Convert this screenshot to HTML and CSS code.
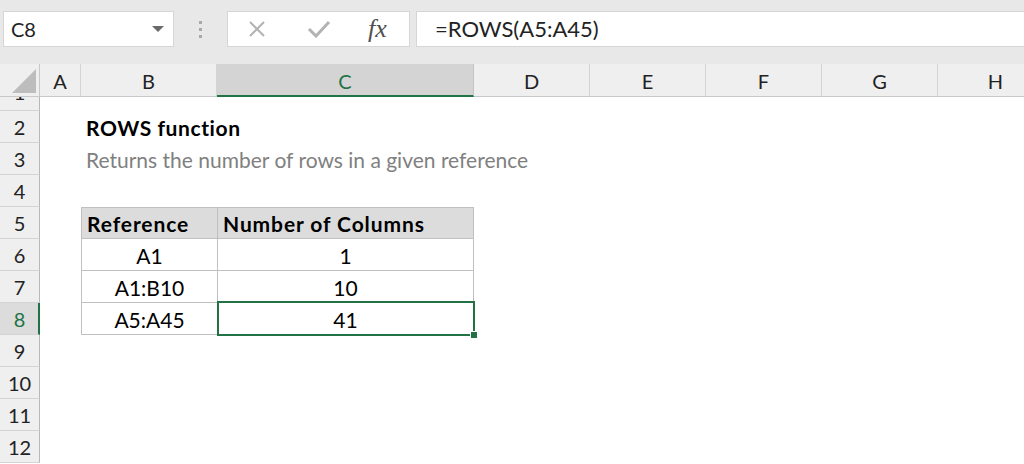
FILE: index.html
```html
<!DOCTYPE html>
<html>
<head>
<meta charset="utf-8">
<link rel="stylesheet" href="styles.css">
</head>
<body>
<div class="toolbar">
  <div class="namebox"><span class="nb-text">C8</span><span class="caret"></span></div>
  <div class="grip"><i></i><i></i><i></i></div>
  <div class="fnbox">
    <svg class="ic-x" width="20" height="16" viewBox="0 0 20 16"><path d="M3 1 L17 15 M17 1 L3 15" stroke="#b3b3b3" stroke-width="2" fill="none"/></svg>
    <svg class="ic-check" width="24" height="18" viewBox="0 0 24 18"><path d="M2 9 L9 16 L22 2" stroke="#b3b3b3" stroke-width="3" fill="none"/></svg>
    <span class="fx">fx</span>
  </div>
  <div class="formula">=ROWS(A5:A45)</div>
</div>
<div class="sheet">
  <div class="corner"><span class="tri"></span></div>
  <div class="ch">A</div>
  <div class="ch">B</div>
  <div class="ch sel">C</div>
  <div class="ch">D</div>
  <div class="ch">E</div>
  <div class="ch">F</div>
  <div class="ch">G</div>
  <div class="ch">H</div>

  <div class="rh r1"><span>1</span></div>
  <div class="rh">2</div>
  <div class="rh">3</div>
  <div class="rh">4</div>
  <div class="rh">5</div>
  <div class="rh">6</div>
  <div class="rh">7</div>
  <div class="rh sel">8</div>
  <div class="rh">9</div>
  <div class="rh">10</div>
  <div class="rh">11</div>
  <div class="rh">12</div>

  <div class="cell title row2">ROWS function</div>
  <div class="cell sub row3">Returns the number of rows in a given reference</div>

  <div class="cell tb colB row5 thead">Reference</div>
  <div class="cell tc colC row5 thead">Number of Columns</div>
  <div class="cell tb colB row6 ctr">A1</div>
  <div class="cell tc colC row6 ctr">1</div>
  <div class="cell tb colB row7 ctr">A1:B10</div>
  <div class="cell tc colC row7 ctr">10</div>
  <div class="cell tb colB row8 ctr">A5:A45</div>
  <div class="cell tc colC row8 ctr active">41</div>
</div>
</body>
</html>
```
FILE: styles.css
```css
html, body {
  margin: 0;
  padding: 0;
  background: #ffffff;
  width: 1024px;
  height: 464px;
  overflow: hidden;
  font-family: "Lato", "Noto Sans", sans-serif;
}

.toolbar {
  height: 64px;
  box-sizing: border-box;
  background: #e8e8e8;
  display: flex;
  align-items: flex-start;
  padding-top: 11px;
}

.namebox {
  margin-left: 3px;
  width: 171px;
  height: 36px;
  box-sizing: border-box;
  background: #fff;
  border: 1px solid #d6d6d6;
  display: flex;
  align-items: center;
  justify-content: space-between;
  padding: 0 9px 0 7px;
  font-size: 20px;
  color: #222;
}

.caret {
  width: 0;
  height: 0;
  border-left: 6px solid transparent;
  border-right: 6px solid transparent;
  border-top: 6px solid #6a6a6a;
}

.grip {
  width: 53px;
  height: 36px;
  display: flex;
  flex-direction: column;
  align-items: center;
  justify-content: center;
  gap: 4px;
}

.grip i {
  display: block;
  width: 3px;
  height: 3px;
  background: #a8a8a8;
}

.fnbox {
  width: 183px;
  height: 36px;
  box-sizing: border-box;
  background: #fff;
  border: 1px solid #d6d6d6;
  display: flex;
  align-items: center;
  padding-left: 19px;
}

.ic-check {
  margin-left: 40px;
}

.fx {
  margin-left: 37px;
  font-family: "Liberation Serif", "DejaVu Serif", serif;
  font-style: italic;
  font-size: 26px;
  color: #505050;
  line-height: 1;
}

.formula {
  margin-left: 6px;
  flex: 1;
  height: 36px;
  box-sizing: border-box;
  background: #fff;
  border: 1px solid #d6d6d6;
  border-right: none;
  padding-left: 18px;
  font-size: 22px;
  line-height: 34px;
  color: #222;
}

.sheet {
  display: grid;
  grid-template-columns: 40px 41px 136px 257px 116px 116px 116px 116px 116px;
  grid-template-rows: 33px 14px repeat(11, 32px);
  font-size: 20px;
  color: #1a1a1a;
}

.corner {
  grid-column: 1;
  grid-row: 1;
  background: #efefef;
  border-right: 1px solid #c8c8c8;
  border-bottom: 1px solid #c8c8c8;
  box-sizing: border-box;
  display: flex;
  align-items: flex-end;
  justify-content: flex-end;
  padding: 0 3px 3px 0;
}

.tri {
  width: 0;
  height: 0;
  border-left: 24px solid transparent;
  border-bottom: 24px solid #bdbdbd;
}

.ch {
  grid-row: 1;
  background: #efefef;
  border-right: 1px solid #d4d4d4;
  border-bottom: 1px solid #c8c8c8;
  box-sizing: border-box;
  text-align: center;
  line-height: 32px;
  padding-top: 1px;
  color: #222;
}

.ch.sel {
  background: #d4d4d4;
  border-bottom: 2px solid #217346;
  color: #217346;
  border-right: 1px solid #c4c4c4;
}

.rh {
  grid-column: 1;
  background: #efefef;
  border-bottom: 1px solid #d4d4d4;
  border-right: 1px solid #b8b8b8;
  box-sizing: border-box;
  text-align: center;
  line-height: 32px;
  color: #222;
  overflow: hidden;
}

.rh.r1 span {
  display: block;
  margin-top: -21px;
}

.rh.sel {
  background: #dcdcdc;
  border-right: 2px solid #217346;
  color: #217346;
  padding-left: 1px;
}

.cell {
  box-sizing: border-box;
  line-height: 31px;
  padding: 1px 5px 0 5px;
  white-space: nowrap;
  font-size: 21px;
}

.title {
  grid-column: 3 / span 3;
  grid-row: 3;
  font-weight: 700;
  letter-spacing: 0.6px;
  color: #000;
}

.sub {
  grid-column: 3 / span 5;
  grid-row: 4;
  color: #808080;
}

.row2 { grid-row: 3; }
.row3 { grid-row: 4; }
.row5 { grid-row: 6; }
.row6 { grid-row: 7; }
.row7 { grid-row: 8; }
.row8 { grid-row: 9; }
.colB { grid-column: 3; }
.colC { grid-column: 4; }

.tb {
  border-left: 1px solid #c0c0c0;
  border-bottom: 1px solid #c0c0c0;
}

.tc {
  border-left: 1px solid #c0c0c0;
  border-right: 1px solid #c0c0c0;
  border-bottom: 1px solid #c0c0c0;
}

.row5.tb, .row5.tc {
  border-top: 1px solid #c0c0c0;
  line-height: 30px;
}

.thead {
  background: #dcdcdc;
  font-weight: 700;
  letter-spacing: 0.9px;
  color: #000;
}

.ctr {
  text-align: center;
  color: #000;
}

.active {
  position: relative;
}

.active::after {
  content: "";
  position: absolute;
  left: -1px;
  top: -2px;
  right: -2px;
  bottom: -2px;
  border: 2px solid #217346;
}

.active::before {
  content: "";
  position: absolute;
  right: -5px;
  bottom: -5px;
  width: 6px;
  height: 6px;
  background: #217346;
  border: 1px solid #fff;
  z-index: 2;
}
```
